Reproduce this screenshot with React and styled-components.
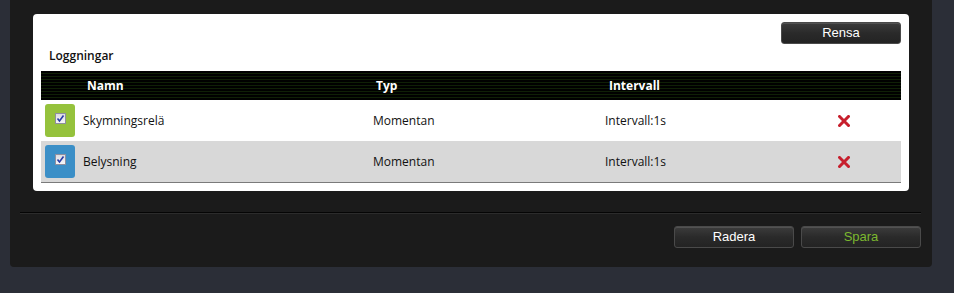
import React from 'react';
import styled, { createGlobalStyle } from 'styled-components';

const GlobalStyle = createGlobalStyle`
  body {
    margin: 0;
    background: #2b2e37;
    font-family: "Open Sans", "DejaVu Sans", sans-serif;
  }
`;

const Panel = styled.div`
  margin-left: 10px;
  width: 922px;
  height: 267px;
  box-sizing: border-box;
  background: #1b1b1b;
  border-radius: 0 0 4px 4px;
  padding: 14px 23px 0 23px;
  display: flex;
  flex-direction: column;
`;

const Card = styled.div`
  background: #fff;
  border-radius: 4px;
  padding: 8px;
  display: flex;
  flex-direction: column;
`;

const Toolbar = styled.div`
  display: flex;
  justify-content: flex-end;
`;

const Button = styled.button`
  width: 120px;
  height: 22px;
  box-sizing: border-box;
  border: 1px solid #4a4a4a;
  border-radius: 3px;
  background: linear-gradient(#3c3c3c, #2a2a2a 50%, #232323);
  box-shadow: inset 0 1px 0 rgba(255,255,255,0.12);
  color: ${p => (p.$accent ? '#7cb82f' : '#fff')};
  font-family: "Liberation Sans", Arial, sans-serif;
  font-size: 13px;
  padding: 0;
  line-height: 20px;
`;

const Title = styled.div`
  font-size: 12px;
  font-weight: 600;
  color: #111;
  padding-left: 8px;
  height: 27px;
  line-height: 24px;
`;

const Table = styled.div`
  display: flex;
  flex-direction: column;
  border-bottom: 1px solid #7a7a7a;
`;

const cols = '332px 232px 233px 1fr';

const HeaderRow = styled.div`
  display: grid;
  grid-template-columns: ${cols};
  height: 29px;
  align-items: center;
  background: repeating-linear-gradient(
    to bottom,
    #000 0px,
    #000 2px,
    #0f1f06 2px,
    #0f1f06 3px
  );
`;

const HeaderCell = styled.div`
  color: #fff;
  font-weight: 700;
  font-size: 12px;
  padding-left: ${p => p.$pad || 3}px;
`;

const Row = styled.div`
  display: grid;
  grid-template-columns: ${cols};
  height: 41px;
  align-items: center;
  background: ${p => (p.$alt ? '#d8d8d8' : '#fff')};
`;

const NameCell = styled.div`
  display: flex;
  align-items: center;
  gap: 8px;
  padding-left: 4px;
  font-size: 12px;
  color: #111;
`;

const Cell = styled.div`
  font-size: 12px;
  color: #111;
`;

const Swatch = styled.div`
  width: 30px;
  height: 33px;
  border-radius: 3px;
  background: ${p => p.$color};
  display: flex;
  align-items: center;
  justify-content: center;
  padding-bottom: 4px;
  box-sizing: border-box;
`;

const Check = styled.span`
  width: 11px;
  height: 11px;
  box-sizing: border-box;
  border: 1px solid #8f8f9f;
  background: linear-gradient(#dcdce2, #f6f6f8);
  display: flex;
  align-items: center;
  justify-content: center;
`;

const DelCell = styled.div`
  display: flex;
  align-items: center;
`;

const Separator = styled.div`
  margin: 21px -12px 0 -13px;
  height: 1px;
  background: #050505;
  border-bottom: 1px solid #2c2c2c;
`;

const Footer = styled.div`
  display: flex;
  justify-content: flex-end;
  gap: 7px;
  margin: 12px -12px 0 0;
`;

const CheckMark = () => (
  <svg width="9" height="9" viewBox="0 0 9 9">
    <path d="M1.5 4.5 L3.5 7 L7.5 1.5" fill="none" stroke="#2a3ca8" strokeWidth="1.6" />
  </svg>
);

const DelIcon = () => (
  <svg width="12" height="12" viewBox="0 0 12 12">
    <path d="M1.5 1.5 L10.5 10.5 M10.5 1.5 L1.5 10.5" stroke="#c71f2d" strokeWidth="3" strokeLinecap="square" />
  </svg>
);

const rows = [
  { name: 'Skymningsrelä', type: 'Momentan', interval: 'Intervall:1s', color: '#95c23c' },
  { name: 'Belysning', type: 'Momentan', interval: 'Intervall:1s', color: '#3b8fc7' },
];

export default function App() {
  return (
    <>
      <GlobalStyle />
      <Panel>
        <Card>
          <Toolbar>
            <Button>Rensa</Button>
          </Toolbar>
          <Title>Loggningar</Title>
          <Table>
            <HeaderRow>
              <HeaderCell $pad={46}>Namn</HeaderCell>
              <HeaderCell>Typ</HeaderCell>
              <HeaderCell $pad={4}>Intervall</HeaderCell>
              <div />
            </HeaderRow>
            {rows.map((r, i) => (
              <Row key={r.name} $alt={i % 2 === 1}>
                <NameCell>
                  <Swatch $color={r.color}>
                    <Check><CheckMark /></Check>
                  </Swatch>
                  {r.name}
                </NameCell>
                <Cell>{r.type}</Cell>
                <Cell>{r.interval}</Cell>
                <DelCell><DelIcon /></DelCell>
              </Row>
            ))}
          </Table>
        </Card>
        <Separator />
        <Footer>
          <Button>Radera</Button>
          <Button $accent>Spara</Button>
        </Footer>
      </Panel>
    </>
  );
}
